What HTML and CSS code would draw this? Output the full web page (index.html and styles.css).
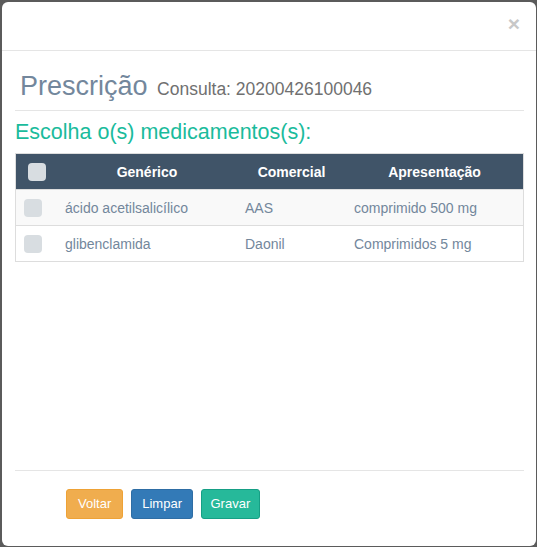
FILE: index.html
```html
<!DOCTYPE html>
<html lang="pt">
<head>
<meta charset="utf-8">
<title>Prescrição</title>
<link rel="stylesheet" href="styles.css">
</head>
<body>
<div class="modal">
  <div class="modal-header">
    <button class="close" type="button">×</button>
  </div>
  <div class="modal-body">
    <h3 class="title">Prescrição <small>Consulta: 20200426100046</small></h3>
    <h4 class="subtitle">Escolha o(s) medicamentos(s):</h4>
    <table class="meds">
      <thead>
        <tr>
          <th class="col-check"><span class="check check-head"></span></th>
          <th class="col-gen">Genérico</th>
          <th class="col-com">Comercial</th>
          <th class="col-apr">Apresentação</th>
        </tr>
      </thead>
      <tbody>
        <tr class="odd">
          <td class="col-check"><span class="check"></span></td>
          <td>ácido acetilsalicílico</td>
          <td>AAS</td>
          <td>comprimido 500 mg</td>
        </tr>
        <tr>
          <td class="col-check"><span class="check"></span></td>
          <td>glibenclamida</td>
          <td>Daonil</td>
          <td>Comprimidos 5 mg</td>
        </tr>
      </tbody>
    </table>
  </div>
  <div class="modal-footer">
    <button class="btn btn-warning" type="button">Voltar</button>
    <button class="btn btn-primary" type="button">Limpar</button>
    <button class="btn btn-success" type="button">Gravar</button>
  </div>
</div>
</body>
</html>
```

FILE: styles.css
```css
html, body {
  margin: 0;
  padding: 0;
}
body {
  background: #5b5b5b;
  font-family: "Liberation Sans", Arial, sans-serif;
  color: #73879c;
  padding: 2px 1px 1px 2px;
  height: 547px;
  box-sizing: border-box;
}
.modal {
  background: #fff;
  border-radius: 6px;
  height: 544px;
  display: flex;
  flex-direction: column;
  overflow: hidden;
}
.modal-header {
  height: 48px;
  border-bottom: 1px solid #e5e5e5;
  display: flex;
  justify-content: flex-end;
  align-items: flex-start;
  padding: 0 16px 0 0;
}
.close {
  background: none;
  border: 0;
  padding: 0;
  margin-top: 11px;
  font-family: "Liberation Sans", Arial, sans-serif;
  font-size: 21px;
  font-weight: bold;
  line-height: 1;
  color: #c8c8c8;
  cursor: pointer;
}
.modal-body {
  flex: 1;
  padding: 0 12px 0 13px;
}
.title {
  margin: 0;
  padding: 15px 0 4px 5px;
  height: 40px;
  line-height: 40px;
  font-size: 27px;
  font-weight: normal;
  color: #73879c;
  border-bottom: 1px solid #e5e5e5;
}
.title small {
  font-size: 17.5px;
  line-height: 1;
  margin-left: 2px;
  color: #707070;
}
.subtitle {
  margin: 6px 0 6px 0;
  line-height: 30px;
  font-size: 21.5px;
  font-weight: normal;
  color: #1abb9c;
}
.meds {
  width: 100%;
  border-collapse: collapse;
  border: 1px solid #ddd;
  font-size: 14px;
}
.meds th {
  background: #405468;
  color: #fff;
  font-weight: bold;
  height: 35px;
  padding: 0 8px;
  text-align: center;
  vertical-align: middle;
}
.meds td {
  height: 35px;
  padding: 0 8px;
  border-top: 1px solid #ddd;
  vertical-align: middle;
  color: #73879c;
}
.meds tr.odd td {
  background: #f9f9f9;
}
.col-check { width: 25px; }
.col-gen { width: 164px; }
.col-com { width: 93px; }
.check {
  display: block;
  width: 18px;
  height: 18px;
  border-radius: 4px;
  background: #d8dde1;
}
.check-head {
  margin: 0 auto;
}
.modal-footer {
  margin: 0 12px 0 13px;
  border-top: 1px solid #e5e5e5;
  padding: 18px 0 27px 51px;
  display: flex;
  gap: 8px;
}
.btn {
  font-family: "Liberation Sans", Arial, sans-serif;
  font-size: 13px;
  line-height: 18px;
  padding: 5px 10px;
  border: 1px solid transparent;
  border-radius: 3px;
  color: #fff;
  cursor: pointer;
}
.btn-warning { background: #f0ad4e; border-color: #eea236; padding: 5px 11px; }
.btn-primary { background: #337ab7; border-color: #2e6da4; }
.btn-success { background: #26b99a; border-color: #169f85; padding: 5px 8.5px; }
```
